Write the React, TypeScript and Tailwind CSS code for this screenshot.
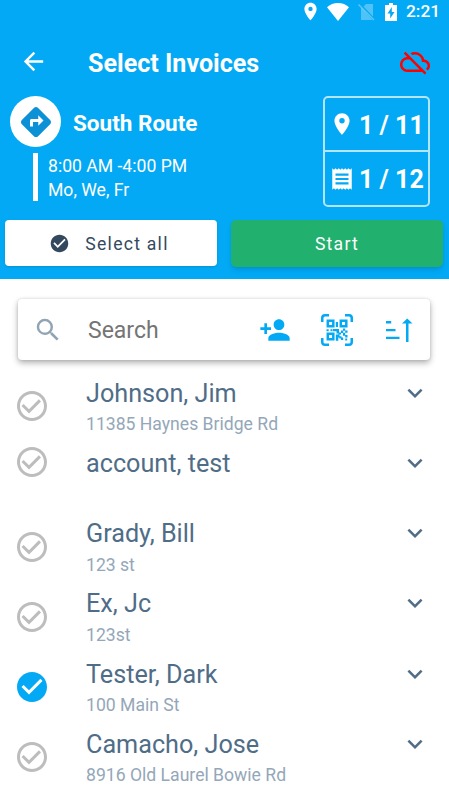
import {
  MdArrowBack,
  MdCheckCircle,
  MdCheckCircleOutline,
  MdDirections,
  MdExpandMore,
  MdLocationOn,
  MdOutlineCloudOff,
  MdPersonAdd,
  MdReceipt,
  MdSearch,
} from "react-icons/md";

interface InvoiceRowProps {
  name: string;
  address?: string;
  selected?: boolean;
}

const invoices: InvoiceRowProps[] = [
  { name: "Johnson, Jim", address: "11385 Haynes Bridge Rd" },
  { name: "account, test" },
  { name: "Grady, Bill", address: "123 st" },
  { name: "Ex, Jc", address: "123st" },
  { name: "Tester, Dark", address: "100 Main St", selected: true },
  { name: "Camacho, Jose", address: "8916 Old Laurel Bowie Rd" },
];

const StatusBar = () => {
  return (
    <div className="flex h-[23px] items-center justify-end pr-[10px]">
      <MdLocationOn className="mr-[6px] size-[21px]" />
      <svg className="mr-[9px] h-[18px] w-[22px]" viewBox="0 0 22 18" fill="currentColor">
        <path d="M11 18 0 4.3C3 1.5 6.700 0 11 0s8 1.500 11 4.300z" />
      </svg>
      <svg className="mr-[10px] h-[18px] w-[17px]" viewBox="0 0 17 18">
        <path d="M3 4.500V17h11.500zM5.500 3.500 8 1h7v12.500z" fill="#fff" opacity=".3" />
        <path d="M.5 1.500 16 17" stroke="#fff" strokeWidth="1.500" opacity=".35" />
      </svg>
      <svg className="mr-[9px] h-[18px] w-[12px]" viewBox="0 0 12 18">
        <path d="M4 0h4v2h4v16H0V2h4z" fill="#fff" />
        <path d="M6.800 4 2.500 10.500h2.700V15.500L9.500 9H6.800z" fill="#03a9f4" />
      </svg>
      <span className="w-[33px] pt-px text-[17.3px] leading-none font-medium">2:21</span>
    </div>
  );
};

const QrScanIcon = () => {
  return (
    <svg className="h-[32px] w-[32px]" viewBox="0 0 32 32" fill="none" stroke="#03a9f4">
      <path
        d="M1.250 8V4Q1.250 1.250 4 1.250H8M24 1.250h4Q30.750 1.250 30.750 4v4M30.750 24v4q0 2.750-2.750 2.750h-4M8 30.750H4Q1.250 30.750 1.250 28v-4"
        strokeWidth="2.500"
      />
      <path
        d="M6.800 6.800h5.500v5.500H6.800zM19.800 6.800h5.500v5.500h-5.500zM6.800 19.800h5.500v5.500H6.800z"
        strokeWidth="2.500"
      />
      <path
        d="M14.800 8h2.200v5h-2.200zM5.500 15.300h2.200v2H5.500zM9.500 15.300h2v2h-2zM12 15h6v4.500h-2.500v-2.200H12zM14.800 20.500h3.700v1.700h2v2.200h-2.200v-1h-1v3.400h-2.500zM17.500 18.500h2.500v2h-2.500zM20 16.500h2.200v2.500H20zM22 14.500h2.200v2.200H22zM24.200 16.500h2.300v2.200h-2.300zM22 18.700h2.200v3H22zM24.200 21h2.300v2.500h-2.300zM20 23.500h2.200v2.500H20zM24.200 24.500h2v2h-2z"
        fill="#03a9f4"
        stroke="none"
      />
    </svg>
  );
};

const SortIcon = () => {
  return (
    <svg className="h-[24px] w-[27px]" viewBox="0 0 27 24" fill="#03a9f4">
      <path d="M0 3h5.200v2.500H0zM0 11h9.500v2.200H0zM0 18.800h13.500v2.200H0z" />
      <path d="M20 24V5.500h-4L21.200.5l5.300 5h-4V24z" />
    </svg>
  );
};

const InvoiceRow = (props: InvoiceRowProps) => {
  return (
    <div className="h-[70.3px]">
      <div className="flex items-center pr-[19px] pl-[14px]">
        {props.selected ? (
          <MdCheckCircle className="size-[36px] text-[#03a9f4]" />
        ) : (
          <MdCheckCircleOutline className="size-[36px] text-[#bdbdbd]" />
        )}
        <div className="ml-[36px] flex-1">
          <div className="flex h-[42px] items-center justify-between">
            <span className="pt-[3px] text-[25.2px] leading-[30px] text-[#4f6d87]">
              {props.name}
            </span>
            <MdExpandMore className="mt-px size-[30px] text-[#4f6d87]" />
          </div>
          {props.address && (
            <div className="h-[28px] text-[17.6px] leading-[22px] text-[#94a7b8]">
              {props.address}
            </div>
          )}
        </div>
      </div>
    </div>
  );
};

const App = () => {
  return (
    <div className="h-[796px] w-[449px] overflow-hidden bg-white font-['Roboto',sans-serif]">
      <header className="h-[279px] bg-[#03a9f4] text-white">
        <StatusBar />
        <div className="flex h-[73px] items-center pt-[4px] pr-[19px] pl-[19px]">
          <MdArrowBack className="size-[29px]" />
          <h1 className="ml-[40px] flex-1 pt-[4px] text-[25.1px] leading-[30px] font-bold">
            Select Invoices
          </h1>
          <MdOutlineCloudOff className="size-[30px] text-[#ff0000]" />
        </div>
        <div className="flex h-[124px] justify-between pr-[19px] pl-[10px]">
          <div>
            <div className="flex items-center">
              <div className="flex size-[51px] items-center justify-center rounded-full bg-white">
                <MdDirections className="size-[36px] text-[#0c91d7]" />
              </div>
              <h2 className="ml-[12px] pt-[2px] text-[22.5px] leading-[28px] font-bold">
                South Route
              </h2>
            </div>
            <div className="mt-[6px] ml-[23px] h-[48px] border-l-[5px] border-white pt-px pl-[10px] text-[17.6px] leading-[24px]">
              <p>8:00 AM -4:00 PM</p>
              <p>Mo, We, Fr</p>
            </div>
          </div>
          <div className="h-[111px] w-[107px] rounded-[5px] border-2 border-[#b3e5fc] text-[25px] font-bold">
            <div className="flex h-[54px] items-center border-b-2 border-[#b3e5fc] pl-[3.5px]">
              <MdLocationOn className="mr-[4.5px] size-[26px]" />
              <span className="pt-[4px]">1 / 11</span>
            </div>
            <div className="flex h-[53px] items-center pl-[3.5px]">
              <MdReceipt className="mr-[4.5px] size-[26px]" />
              <span className="pt-[3px]">1 / 12</span>
            </div>
          </div>
        </div>
        <div className="flex pl-[5px] text-[17.6px] tracking-[1.25px]">
          <button className="flex h-[46px] w-[212px] items-center justify-center rounded-[4px] bg-white pr-[4px] text-[#34495e] shadow-sm">
            <MdCheckCircle className="mr-[15px] size-[21px]" />
            <span className="pt-[2px]">Select all</span>
          </button>
          <button className="ml-[14px] h-[47px] w-[212px] rounded-[5px] bg-[#22b06e] pt-px shadow-md">
            Start
          </button>
        </div>
      </header>

      <div className="mr-[19px] ml-[18px] mt-[20px] flex h-[61px] items-center rounded-[4px] bg-white pl-[15px] shadow-[0_3px_6px_rgba(0,0,0,0.3),0_0_3px_rgba(0,0,0,0.12)]">
        <MdSearch className="size-[30px] text-[#90a4b4]" />
        <span className="ml-[25px] w-[171px] pt-[3px] text-[23px] text-[#757575]">Search</span>
        <MdPersonAdd className="mr-[30px] size-[32px] text-[#03a9f4]" />
        <QrScanIcon />
        <div className="ml-[33px]">
          <SortIcon />
        </div>
      </div>

      <div className="mt-[11px]">
        {invoices.map((item, index) => (
          <InvoiceRow key={"invoice-" + index} {...item} />
        ))}
      </div>
    </div>
  );
};

export default App;
